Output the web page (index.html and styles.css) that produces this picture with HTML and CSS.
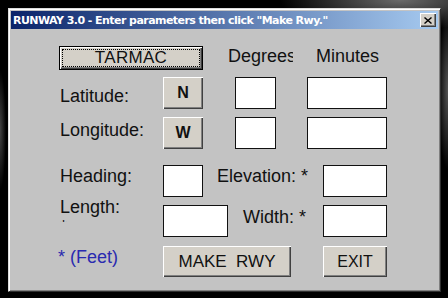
FILE: index.html
```html
<html>
	<head>
		<title>Runway 3.0</title>
		<link rel="stylesheet" href="styles.css">
	</head>
	<body>
		<div class="window">
			<div class="titlebar">
				<span class="title">RUNWAY 3.0 - Enter parameters then click "Make Rwy."</span>
				<span class="close">
					<svg width="8" height="7" viewBox="0 0 8 7">
						<path d="M0.5 0.5 L7.5 6.5 M7.5 0.5 L0.5 6.5" stroke="#000" stroke-width="1.4" fill="none"/>
					</svg>
				</span>
			</div>
			<div class="panel">
				<div class="row row-type">
					<div class="button button-default"><span class="focus">TARMAC</span></div>
					<span class="colhead col-deg">Degrees</span>
					<span class="colhead col-min">Minutes</span>
				</div>
				<div class="row row-lat">
					<span class="label label-lat">Latitude:</span>
					<div class="button button-dir">N</div>
					<div class="field field-deg"></div>
					<div class="field field-min"></div>
				</div>
				<div class="row row-lon">
					<span class="label label-lon">Longitude:</span>
					<div class="button button-dir">W</div>
					<div class="field field-deg"></div>
					<div class="field field-min"></div>
				</div>
				<div class="row row-heading">
					<span class="label label-top">Heading:</span>
					<div class="field field-heading"></div>
					<span class="label label-elev">Elevation: *</span>
					<div class="field field-right"></div>
				</div>
				<div class="row row-length">
					<span class="label label-length">Length:<br>*</span>
					<div class="field field-length"></div>
					<span class="label label-width">Width: *</span>
					<div class="field field-right"></div>
				</div>
				<div class="row row-actions">
					<span class="label label-feet">* (Feet)</span>
					<div class="button button-make">MAKE&nbsp;&nbsp;RWY</div>
					<div class="button button-exit">EXIT</div>
				</div>
			</div>
		</div>
	</body>
</html>
```
FILE: styles.css
```css
body {
	margin: 0px;
	height: 298px;
	overflow: hidden;
	background-color: #000;
	background-image: radial-gradient(ellipse 120px 30px at 400px 0px, #6a6a6a, rgba(0,0,0,0)),
		radial-gradient(ellipse 10px 80px at 448px 90px, #555, rgba(0,0,0,0)),
		radial-gradient(ellipse 6px 60px at 0px 130px, #444, rgba(0,0,0,0));
	font-family: "Liberation Sans", Arial, sans-serif;
}
.window {
	width: 433px;
	height: 284px;
	margin: 8px 0 0 8px;
	box-sizing: border-box;
	padding: 2px;
	background: #c3c3c3;
	border: 1px solid;
	border-color: #dcdcdc #303030 #303030 #dcdcdc;
	box-shadow: inset 1px 1px #fff, inset -1px -1px #808080;
	display: flex;
	flex-direction: column;
}
.titlebar {
	height: 18px;
	display: flex;
	align-items: center;
	justify-content: space-between;
	padding: 0 2px 0 2px;
	background: linear-gradient(to right, #0a246a, #a6caf0);
}
.title {
	color: #fff;
	font-family: "DejaVu Sans", sans-serif;
	font-weight: bold;
	font-size: 11px;
	letter-spacing: -0.55px;
	white-space: nowrap;
}
.close {
	width: 16px;
	height: 14px;
	box-sizing: border-box;
	display: flex;
	align-items: center;
	justify-content: center;
	background: #d4d0c8;
	box-shadow: inset 1px 1px #fff, inset -1px -1px #404040, inset -2px -2px #808080;
}
.panel {
	flex: 1;
	padding: 17px 0 0 49px;
	color: #111;
	font-size: 18px;
}
.row {
	display: flex;
	align-items: flex-start;
}
.row-lat { margin-top: 7px; }
.row-lon { margin-top: 8px; }
.row-heading { margin-top: 16px; }
.row-length { margin-top: 8px; }
.row-actions { margin-top: 9px; }

.label {
	display: block;
	width: 103px;
	line-height: 20px;
	white-space: nowrap;
}
.label-lat { margin-top: 9px; }
.label-lon { margin-top: 3px; }
.label-top { margin-top: 1px; }
.label-elev {
	width: 106px;
	margin: 1px 0 0 14px;
}
.label-length {
	margin-top: -8px;
	height: 25px;
	overflow: hidden;
}
.label-width {
	width: 80px;
	margin: 2px 0 0 15px;
}
.label-feet {
	width: 105px;
	margin: 1px 0 0 -2px;
	color: #2a2ab0;
}

.colhead {
	display: block;
	line-height: 20px;
	white-space: nowrap;
	overflow: hidden;
}
.col-deg {
	width: 65px;
	margin-left: 25px;
}
.col-min {
	margin-left: 23px;
}

.button {
	box-sizing: border-box;
	display: flex;
	align-items: center;
	justify-content: center;
	background: #d4d0c8;
	color: #111;
	font-size: 17px;
	white-space: nowrap;
	box-shadow: inset 1px 1px #fff, inset -1px -1px #404040, inset -2px -2px #808080;
}
.button-default {
	width: 144px;
	height: 24px;
	margin-left: -1px;
	border: 1px solid #000;
	padding: 2px;
}
.focus {
	flex: 1;
	align-self: stretch;
	display: flex;
	align-items: center;
	justify-content: center;
	border: 1px dotted #000;
	letter-spacing: 0.3px;
}
.button-dir {
	width: 40px;
	height: 32px;
	font-size: 16px;
	font-weight: bold;
}
.button-make {
	width: 128px;
	height: 31px;
}
.button-exit {
	width: 64px;
	height: 31px;
	margin-left: 32px;
	font-size: 16px;
}

.field {
	box-sizing: border-box;
	height: 32px;
	background: #fff;
	border: 1px solid #111;
}
.field-deg {
	width: 41px;
	margin-left: 32px;
}
.field-min {
	width: 80px;
	margin-left: 31px;
}
.field-heading { width: 40px; }
.field-length { width: 65px; }
.field-right { width: 64px; }
```
